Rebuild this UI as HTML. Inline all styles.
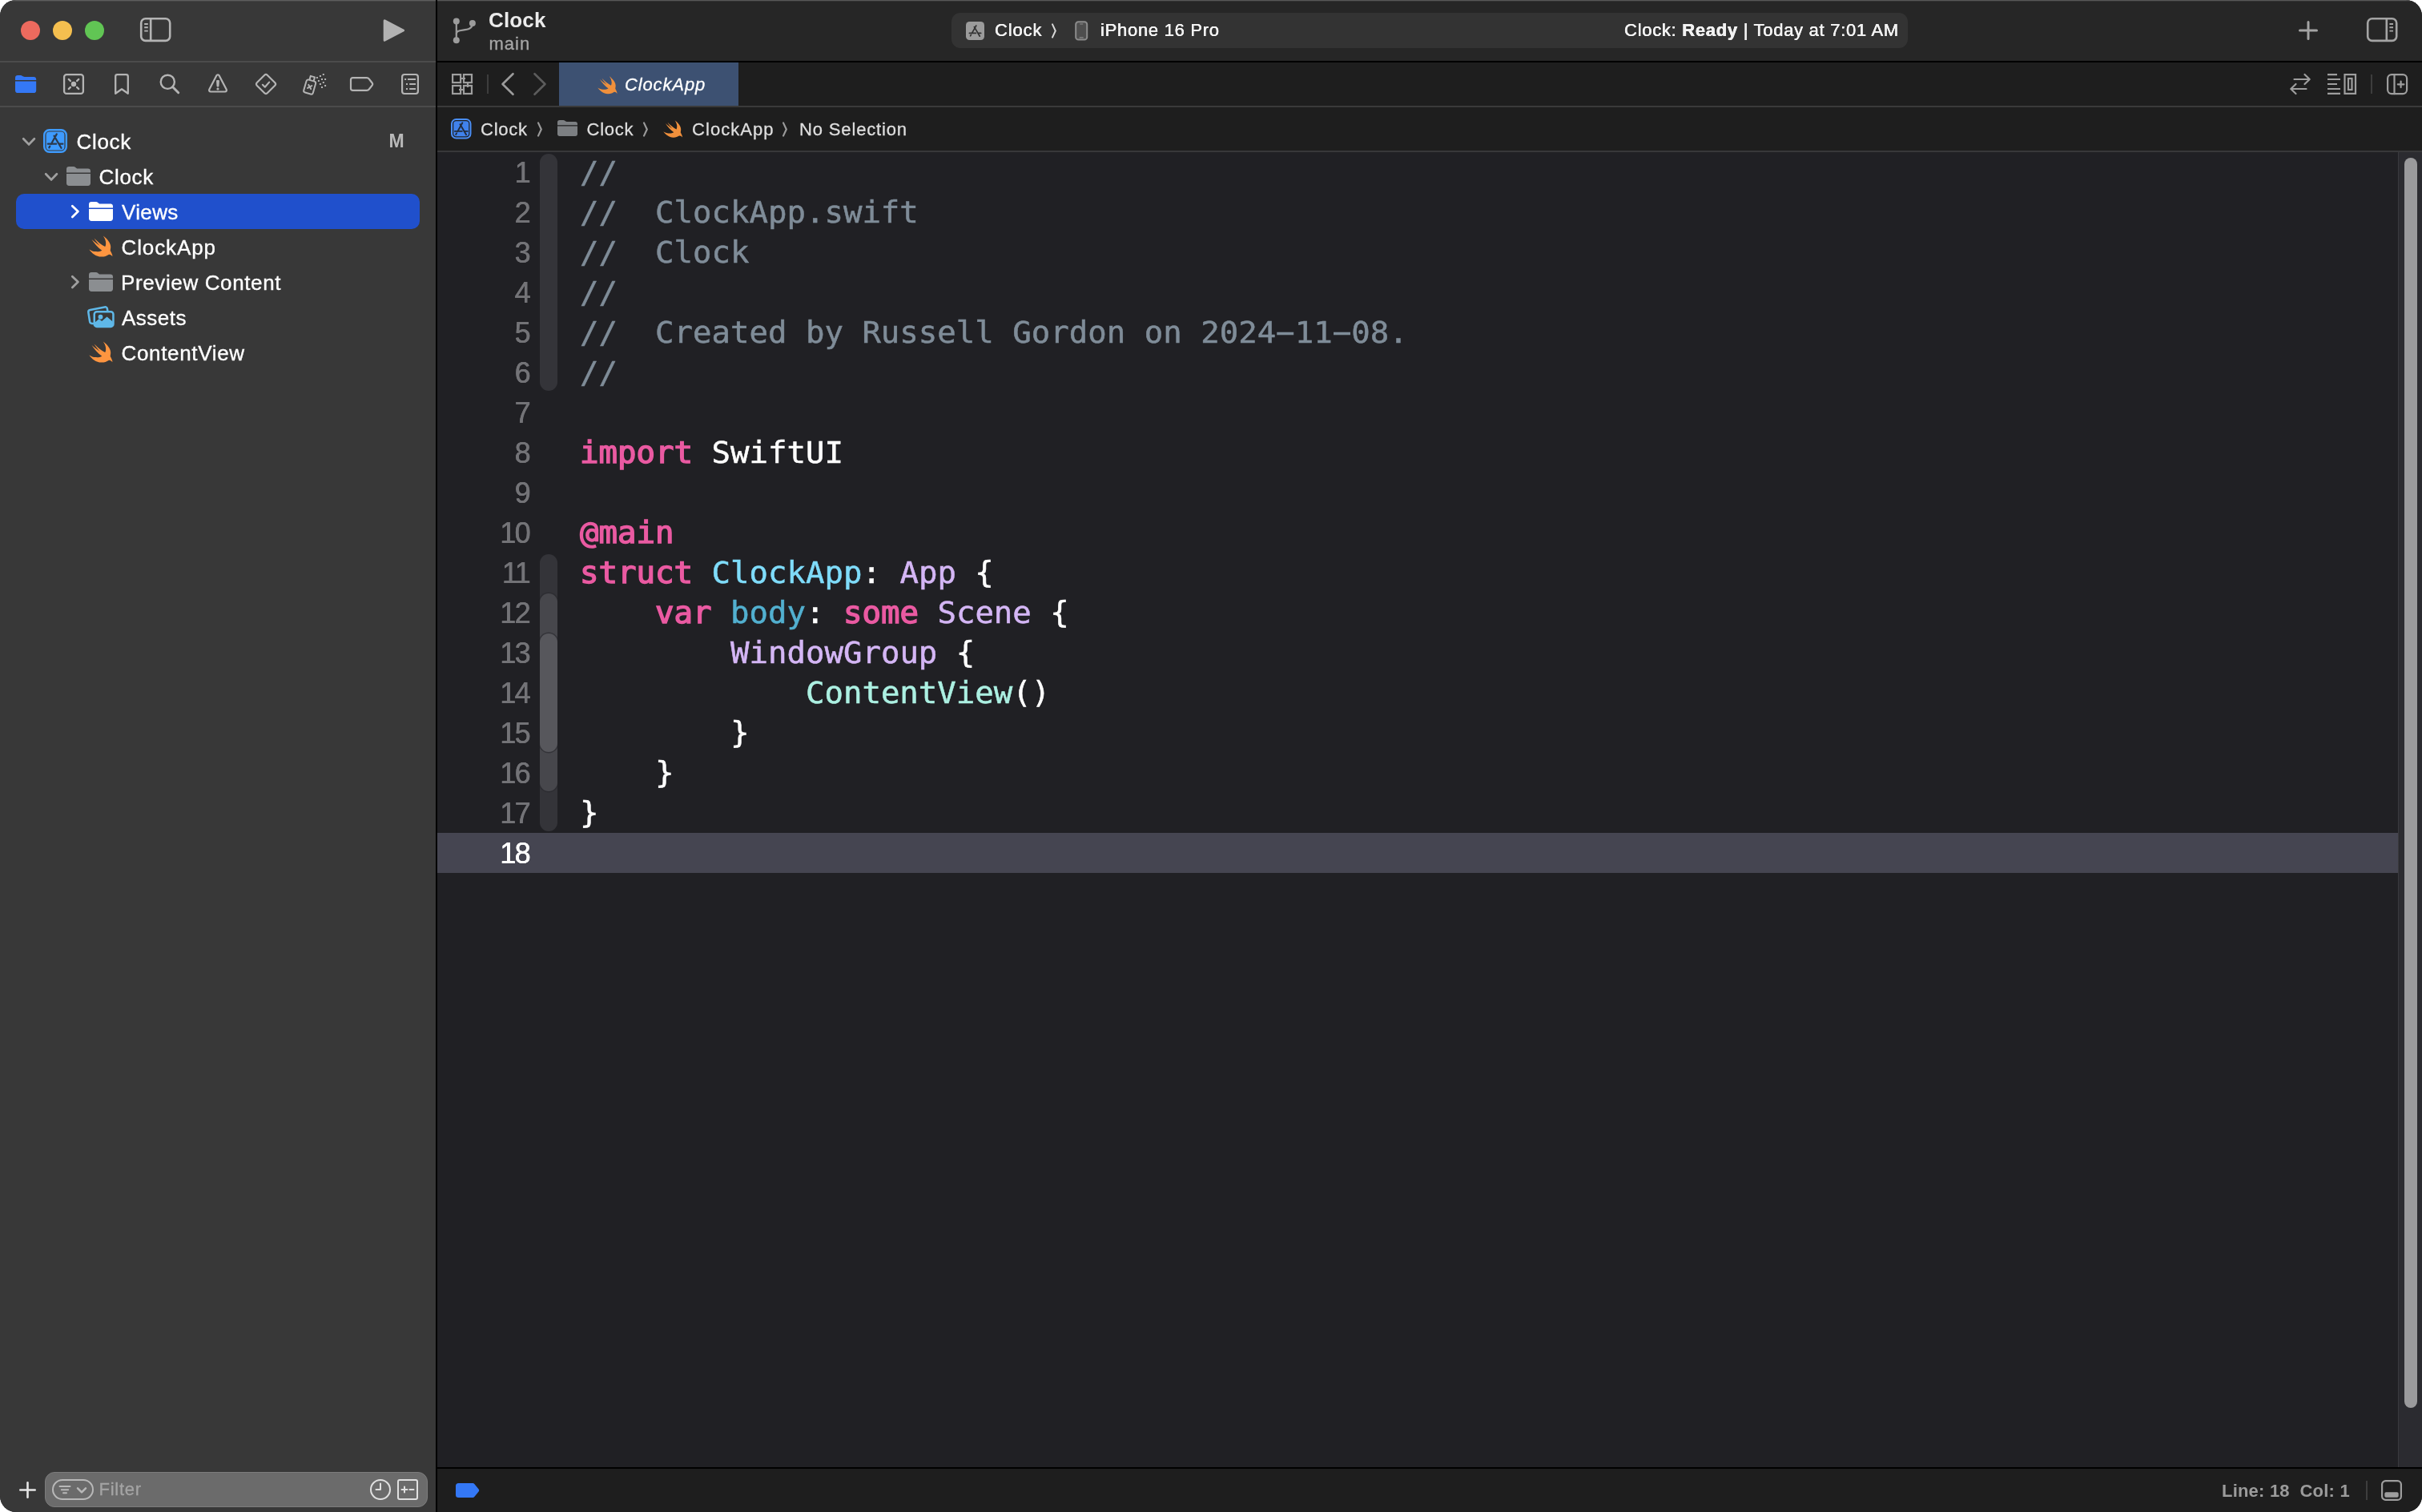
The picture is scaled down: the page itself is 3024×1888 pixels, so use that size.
<!DOCTYPE html>
<html lang="en">
<head>
<meta charset="utf-8">
<title>Clock — ClockApp.swift</title>
<style>
*{box-sizing:border-box;margin:0;padding:0}
html,body{width:3024px;height:1888px;background:#fff;overflow:hidden}
body{font-family:"Liberation Sans",sans-serif;color:#fff;-webkit-font-smoothing:antialiased}
#win{will-change:transform;position:absolute;left:0;top:0;width:3024px;height:1888px;border-radius:20px;overflow:hidden;background:#1f1f24}
.abs{position:absolute}
svg{position:absolute;overflow:visible}
.t{position:absolute;white-space:pre;line-height:1}
/* ---------- sidebar ---------- */
#side{position:absolute;left:0;top:0;width:544px;height:1888px;background:#383838}
#vdiv{position:absolute;left:544px;top:0;width:2px;height:1888px;background:#000}
.hl{position:absolute;left:0;width:544px;height:2px;background:#4b4b4b}
.tl{position:absolute;top:26px;width:24px;height:24px;border-radius:50%}
.row{position:absolute;left:0;width:544px;height:44px}
.row .t{font-size:26px;top:9px;color:#fff}
#sel{position:absolute;left:20px;top:242px;width:504px;height:44px;border-radius:10px;background:#2050cc}
/* ---------- editor chrome ---------- */
#title{position:absolute;left:546px;top:0;width:2478px;height:76px;background:#262626}
#tline{position:absolute;left:546px;top:76px;width:2478px;height:2px;background:#000}
#tabs{position:absolute;left:546px;top:78px;width:2478px;height:54px;background:#1e1e1e}
#tabsb{position:absolute;left:546px;top:132px;width:2478px;height:2px;background:#3a3a3a}
#jump{position:absolute;left:546px;top:134px;width:2478px;height:54px;background:#1e1e1e}
#jumpb{position:absolute;left:546px;top:188px;width:2478px;height:2px;background:#38383a}
#tab{position:absolute;left:698px;top:78px;width:224px;height:54px;background:#3d5172}
#pill{position:absolute;left:1188px;top:16px;width:1194px;height:44px;border-radius:11px;background:#333333}
.jb{font-size:22px;color:#dedede;top:151px;-webkit-text-stroke:0.3px #dedede}
.tb{font-size:22px;color:#f2f2f2;text-shadow:0.3px 0 0 currentColor,-0.15px 0 0 currentColor}
/* ---------- code ---------- */
#code{position:absolute;left:546px;top:190px;width:2448px;height:1642px;background:#202024}
#cur{position:absolute;left:546px;top:1040px;width:2448px;height:50px;background:#454551}
.ln{position:absolute;left:560px;width:103px;height:50px;text-align:right;font-family:"Liberation Sans",sans-serif;font-size:36px;line-height:50px;color:#737377;padding-top:1px;letter-spacing:-1.6px;padding-right:2px;text-shadow:0.4px 0 0 currentColor,-0.2px 0 0 currentColor}
.cl{position:absolute;left:724px;height:50px;font-family:"DejaVu Sans Mono","Liberation Mono",monospace;font-size:37px;line-height:50px;white-space:pre;color:#fff;transform:scaleX(1.0546);transform-origin:0 0}
.cl{-webkit-text-stroke:0.5px;margin-top:0.8px}.c{color:#7f8c98}.k{color:#ea5aa2;-webkit-text-stroke:1.4px}.ty{color:#7fdcfa}.d{color:#52b0d0}.p{color:#d4b6f5}.u{color:#acf0e2}
#track{position:absolute;left:2994px;top:190px;width:30px;height:1642px;background:#2b2b30;border-left:1px solid #3a3a3e}
#thumb{position:absolute;left:3002px;top:197px;width:16px;height:1561px;border-radius:8px;background:#9a9a9c}
#bline{position:absolute;left:546px;top:1832px;width:2478px;height:2px;background:#000}
#bbar{position:absolute;left:546px;top:1834px;width:2478px;height:54px;background:#1e1e1e}
.hy{display:inline-block;transform:scaleX(2) translateY(-1px)}
.rib{position:absolute;left:674px;width:22px;border-radius:11px}
</style>
</head>
<body>
<div id="win">
<div id="side">
  <div class="abs" style="left:0;top:0;width:544px;height:1px;background:#5e5e5e"></div>
  <div class="abs" style="left:0;top:1px;width:544px;height:1px;background:#454545"></div>
  <div class="tl" style="left:26px;background:#ed6a5e"></div>
  <div class="tl" style="left:66px;background:#f5bf4f"></div>
  <div class="tl" style="left:106px;background:#61c554"></div>
  <!-- sidebar toggle -->
  <svg style="left:174px;top:21px" width="40" height="32" viewBox="0 0 40 32" fill="none" stroke="#b4b4b4" stroke-width="2.6">
    <rect x="2.2" y="2.3" width="36" height="27.6" rx="5.5"/><path d="M14.2 2.3V29.9"/><path d="M6.2 9h4.6M6.2 13.3h4.6M6.2 17.6h4.6" stroke-width="1.9"/>
  </svg>
  <!-- play -->
  <svg style="left:476px;top:22px" width="32" height="32" viewBox="0 0 32 32"><path d="M4.2 3.8 L27.6 16 L4.2 28.2 Z" fill="#b2b2b2" stroke="#b2b2b2" stroke-width="3" stroke-linejoin="round"/></svg>
  <div class="hl" style="top:76px"></div>
  <div class="hl" style="top:132px"></div>
  <!-- nav icons -->
  <svg style="left:18px;top:92px" width="28" height="26" viewBox="0 0 28 26"><path d="M1 5.200C1 3.200 2.300 2 4.200 2h3.400c1 0 1.700.3 2.400.9l1.100.7c.5.300 1 .400 1.800.400h11.200c1.900 0 3.100 1.200 3.100 3.100V8.100H1z" fill="#3478f6"/><path d="M1 9.600h26.200v11.300c0 2-1.200 3.200-3.200 3.200H4.200C2.200 24.100 1 22.900 1 20.900z" fill="#3478f6"/></svg>
  <svg style="left:78px;top:91px" width="28" height="28" viewBox="0 0 28 28" fill="none" stroke="#b4b4b4" stroke-width="2.300" stroke-linecap="round"><rect x="2.100" y="2.100" width="23.800" height="23.800" rx="3"/><circle cx="14" cy="14" r="3.200" fill="#b4b4b4" stroke="none"/><path d="M7.700 7.900l2.300 2.200M20.300 7.900l-2.300 2.200M7.700 20.100l2.300-2.200M20.300 20.100l-2.300-2.200" stroke-width="2.200"/></svg>
  <svg style="left:142px;top:91px" width="20" height="28" viewBox="0 0 20 28" fill="none" stroke="#b4b4b4" stroke-width="2.3" stroke-linejoin="round"><path d="M2.200 4.500c0-1.400.8-2.300 2.300-2.300h11c1.500 0 2.300.9 2.300 2.300V25.800L10 20.300 2.200 25.800z"/></svg>
  <svg style="left:198px;top:91px" width="28" height="28" viewBox="0 0 28 28" fill="none" stroke="#b4b4b4" stroke-width="2.4" stroke-linecap="round"><circle cx="11.300" cy="11.300" r="8.600"/><path d="M17.800 17.800l6.900 6.900" stroke-width="3"/></svg>
  <svg style="left:258px;top:91px" width="28" height="27" viewBox="0 0 28 27" fill="none" stroke="#b4b4b4" stroke-width="2.2" stroke-linejoin="round"><path d="M12.400 3.300c.7-1.400 2.500-1.400 3.200 0l9 17.300c.8 1.500 0 2.900-1.700 2.900H5.100c-1.700 0-2.500-1.400-1.700-2.900z"/><path d="M12.600 9.600h2.800l-.5 7.400h-1.800z" fill="#b4b4b4" stroke-width="1"/><circle cx="14" cy="20" r="1.600" fill="#b4b4b4" stroke="none"/></svg>
  <svg style="left:318px;top:91px" width="28" height="28" viewBox="0 0 28 28" fill="none" stroke="#b4b4b4" stroke-width="2.2" stroke-linejoin="round" stroke-linecap="round"><path d="M12.300 2.700c1-1 2.400-1 3.400 0l9.600 9.600c1 1 1 2.400 0 3.400l-9.600 9.600c-1 1-2.400 1-3.400 0l-9.600-9.600c-1-1-1-2.400 0-3.400z"/><path d="M9.900 14.800l2.900 2.900 5.300-6.100"/></svg>
  <svg style="left:376px;top:90px" width="32" height="30" viewBox="0 0 32 30" fill="none" stroke="#b4b4b4" stroke-width="2" stroke-linejoin="round"><g transform="translate(0.3 -0.7) rotate(16 10 17)"><rect x="5" y="10.800" width="12" height="16.600" rx="2.400"/><path d="M8.300 10.800V5.600h5.400v5.200"/><path d="M8.900 16.900l4.200 4.200M13.100 16.900l-4.200 4.200" stroke-linecap="round"/></g><g fill="#b4b4b4" stroke="none"><rect x="26.800" y="2" width="2" height="2"/><rect x="22.900" y="4" width="2" height="2"/><rect x="18.900" y="6" width="2" height="2"/><rect x="25" y="8" width="2" height="2"/><rect x="29.100" y="8" width="2" height="2"/><rect x="20.900" y="10" width="2" height="2"/><rect x="26.800" y="12" width="2" height="2"/><rect x="22.900" y="14" width="2" height="2"/><rect x="29.100" y="16" width="2" height="2"/><rect x="25" y="18" width="2" height="2"/></g></svg>
  <svg style="left:436px;top:95px" width="32" height="20" viewBox="0 0 32 20" fill="none" stroke="#b4b4b4" stroke-width="2.200" stroke-linejoin="round"><path d="M4.500 2.100h17.300c1.400 0 2.300.5 3.100 1.600l3.900 5c.6.800.6 1.800 0 2.600l-3.900 5c-.8 1.100-1.700 1.600-3.100 1.600H4.500c-1.600 0-2.500-.9-2.500-2.500V4.600c0-1.600.9-2.500 2.500-2.500z"/></svg>
  <svg style="left:500px;top:91px" width="24" height="28" viewBox="0 0 24 28" fill="none" stroke="#b4b4b4" stroke-width="2.2"><rect x="2.100" y="2" width="19.800" height="24" rx="3"/><path d="M9 8h10M11.200 14h7.800M11.200 20h7.800" stroke-width="2"/><path d="M5.200 8h2M7 14h2M7 20h2" stroke-width="2"/></svg>
  <!-- rows -->
  <div id="sel"></div>
  <svg style="left:27px;top:171px" width="18" height="12" viewBox="0 0 18 12" fill="none" stroke="#a0a0a0" stroke-width="2.8" stroke-linecap="round" stroke-linejoin="round"><path d="M2.2 2.3L9.05 9.4L15.9 2.3"/></svg><svg style="left:54px;top:161px" width="30" height="30" viewBox="0 0 30 30" fill="none"><rect x="1.2" y="1.2" width="27.6" height="27.6" rx="6.5" stroke="#3e9bff" stroke-width="2.4"/><rect x="3.6" y="3.6" width="22.8" height="22.8" rx="4" fill="#3e9bff"/><path d="M16.8 6.4L9.8 19M8.3 21.6l-1 1.8M13.5 8.6l9 15.2M5.8 18.7h10.4M20.2 18.7h4.2" stroke="#2c3a4c" stroke-width="2.2" stroke-linecap="round"/></svg><span class="t" style="left:95.5px;top:163.5px;font-size:26px;letter-spacing:0.7px;-webkit-text-stroke:0.35px #fff;">Clock</span><span class="t" style="left:485.4px;top:164.7px;font-size:23px;font-weight:bold;color:#b9b9b9">M</span>
  <svg style="left:55px;top:215px" width="18" height="12" viewBox="0 0 18 12" fill="none" stroke="#a0a0a0" stroke-width="2.8" stroke-linecap="round" stroke-linejoin="round"><path d="M2.2 2.3L9.05 9.4L15.9 2.3"/></svg><svg style="left:83px;top:208px" width="30" height="24" viewBox="0 0 30 24"><path d="M0 3.2C0 1.2 1.2 0 3.2 0h5.6c1 0 1.7.3 2.4.9l1.2 1c.5.4 1 .6 1.8.6h12.6c2 0 3.2 1.2 3.2 3.2V7.4H0z" fill="#8b8e91"/><path d="M0 9.1h30v11.7c0 2-1.2 3.2-3.2 3.2H3.2C1.2 24 0 22.8 0 20.8z" fill="#8b8e91"/></svg><span class="t" style="left:123.5px;top:207.5px;font-size:26px;letter-spacing:0.7px;-webkit-text-stroke:0.35px #fff;">Clock</span>
  <svg style="left:88px;top:254.5px" width="12" height="18" viewBox="0 0 12 18" fill="none" stroke="#ffffff" stroke-width="2.8" stroke-linecap="round" stroke-linejoin="round"><path d="M2.3 2.2L9.4 9.05L2.3 15.9"/></svg><svg style="left:110.5px;top:252px" width="30" height="24" viewBox="0 0 30 24"><path d="M0 3.2C0 1.2 1.2 0 3.2 0h5.6c1 0 1.7.3 2.4.9l1.2 1c.5.4 1 .6 1.8.6h12.6c2 0 3.2 1.2 3.2 3.2V7.4H0z" fill="#ffffff"/><path d="M0 9.1h30v11.7c0 2-1.2 3.2-3.2 3.2H3.2C1.2 24 0 22.8 0 20.8z" fill="#ffffff"/></svg><span class="t" style="left:152px;top:251.5px;font-size:26px;letter-spacing:0.35px;-webkit-text-stroke:0.35px #fff;">Views</span>
  <svg style="left:110.5px;top:293.5px" width="30" height="27" viewBox="0 0 30 27"><path d="M17.8.4C23 4 27.5 10 27.2 14.5c-.1 2-.4 3.3-.5 4.4 1.3 2.1 2.8 5.1 2.7 7.4-1.4-1.8-2.9-2.8-4.8-2.4-2.6 1.6-5.6 2.9-9.2 2.7C9 26.5 3.5 22 .4 17.4 3 19 5.5 20 8 20.1c3 .2 5.8.1 8.3-1.4C11 15 6.5 9.5 3.5 4.9c3 2.6 6.5 5.6 10.4 8C11 10 8.5 6.5 6.6 3.4c3.9 4.1 8.9 8.1 13.6 10.7C22 11 21.5 5.5 17.8.4z" fill="#fe9540"/></svg><span class="t" style="left:151.5px;top:295.5px;font-size:26px;letter-spacing:0.9px;-webkit-text-stroke:0.35px #fff;">ClockApp</span>
  <svg style="left:88px;top:342.5px" width="12" height="18" viewBox="0 0 12 18" fill="none" stroke="#a0a0a0" stroke-width="2.8" stroke-linecap="round" stroke-linejoin="round"><path d="M2.3 2.2L9.4 9.05L2.3 15.9"/></svg><svg style="left:110.5px;top:340px" width="30" height="24" viewBox="0 0 30 24"><path d="M0 3.2C0 1.2 1.2 0 3.2 0h5.6c1 0 1.7.3 2.4.9l1.2 1c.5.4 1 .6 1.8.6h12.6c2 0 3.2 1.2 3.2 3.2V7.4H0z" fill="#8b8e91"/><path d="M0 9.1h30v11.7c0 2-1.2 3.2-3.2 3.2H3.2C1.2 24 0 22.8 0 20.8z" fill="#8b8e91"/></svg><span class="t" style="left:151px;top:339.5px;font-size:26px;letter-spacing:0.62px;-webkit-text-stroke:0.35px #fff;">Preview Content</span>
  <svg style="left:108.5px;top:381px" width="34" height="28.5" viewBox="0 0 35 29" fill="none" stroke="#5fb8e8" stroke-width="2.6" stroke-linejoin="round"><path d="M8.5 23.6l-2.6-.2c-1.5-.1-2.4-1-2.7-2.4L1.4 9.3C1.1 7.5 2 6.3 3.7 6L22.3 2.3c1.7-.3 3 .5 3.3 2.2l.6 3.3"/><rect x="9" y="8.3" width="24.4" height="19.2" rx="3.2"/><circle cx="17" cy="15" r="3" fill="#5fb8e8" stroke="none"/><path d="M9.8 22l5.2-4.3 3.7 2.8 6.6-5.7 7.5 6.5v4.2c0 .9-.6 1.5-1.5 1.5H11.3c-.9 0-1.5-.6-1.5-1.5z" fill="#5fb8e8" stroke="none"/></svg><span class="t" style="left:152px;top:383.5px;font-size:26px;letter-spacing:0.5px;-webkit-text-stroke:0.35px #fff;">Assets</span>
  <svg style="left:110.5px;top:425.5px" width="30" height="27" viewBox="0 0 30 27"><path d="M17.8.4C23 4 27.5 10 27.2 14.5c-.1 2-.4 3.3-.5 4.4 1.3 2.1 2.8 5.1 2.7 7.4-1.4-1.8-2.9-2.8-4.8-2.4-2.6 1.6-5.6 2.9-9.2 2.7C9 26.5 3.5 22 .4 17.4 3 19 5.5 20 8 20.1c3 .2 5.8.1 8.3-1.4C11 15 6.5 9.5 3.5 4.9c3 2.6 6.5 5.6 10.4 8C11 10 8.5 6.5 6.6 3.4c3.9 4.1 8.9 8.1 13.6 10.7C22 11 21.5 5.5 17.8.4z" fill="#fe9540"/></svg><span class="t" style="left:151.5px;top:427.5px;font-size:26px;letter-spacing:0.66px;-webkit-text-stroke:0.35px #fff;">ContentView</span>
  <!-- bottom filter -->
  <svg style="left:23px;top:1849px" width="23" height="23" viewBox="0 0 23 23" stroke="#e6e6e6" stroke-width="2.6" stroke-linecap="round"><path d="M11.500 2.300v18.400M2.300 11.500h18.400"/></svg>
  <div class="abs" style="left:56px;top:1838px;width:478px;height:44px;border-radius:12px;background:#6b6b6b;border:1.500px solid #7c7c7c"></div>
  <svg style="left:64px;top:1846px" width="54" height="28" viewBox="0 0 54 28" fill="none" stroke="#b8b8b8" stroke-width="2" stroke-linecap="round"><rect x="2" y="2" width="50" height="24" rx="12"/><path d="M10.500 10h13M12.800 14.200h8.400M15 18.300h4"/><path d="M33 12.300l5 5 5-5" stroke-width="2.500" stroke-linejoin="round"/></svg>
  <span class="t" style="left:123.500px;top:1848.500px;font-size:22px;color:#a4a4a4;letter-spacing:0.76px;-webkit-text-stroke:0.3px #a4a4a4">Filter</span>
  <svg style="left:461px;top:1846px" width="28" height="28" viewBox="0 0 28 28" fill="none" stroke="#e0e0e0" stroke-width="2"><circle cx="14" cy="14" r="12"/><path d="M14 6.500V14H8.500" stroke-linecap="round" stroke-linejoin="round"/></svg>
  <svg style="left:495px;top:1846px" width="28" height="28" viewBox="0 0 28 28" fill="none" stroke="#e0e0e0" stroke-width="2"><rect x="2" y="2" width="24" height="24" rx="2"/><path d="M6.500 14h7M10 10.500v7M16.500 14h5" stroke-linecap="round"/></svg>
</div>
<div id="vdiv"></div>

<div id="title"><div class="abs" style="left:0;top:0;width:2478px;height:1px;background:#585858"></div><div class="abs" style="left:0;top:1px;width:2478px;height:1px;background:#333333"></div></div>
<div id="tline"></div>
<!-- branch icon -->
<svg style="left:564px;top:21px" width="32" height="36" viewBox="0 0 32 36" fill="none" stroke="#9c9c9c" stroke-width="2.2"><path d="M5.8 5.6V29.2"/><path d="M5.8 21.5c0-3.5 2.5-4.3 8-4.9 7-.7 11.9-2 12.1-8.5"/><g fill="#9c9c9c" stroke="none"><circle cx="5.8" cy="5.6" r="4"/><circle cx="25.9" cy="8.1" r="4"/><circle cx="5.8" cy="29.2" r="4"/></g></svg>
<span class="t" style="left:610px;top:11.5px;font-size:26px;font-weight:bold;color:#ebebeb;letter-spacing:0.15px">Clock</span>
<span class="t" style="left:610.5px;top:44px;font-size:22px;color:#a6a6a6;letter-spacing:1px;-webkit-text-stroke:0.3px #a6a6a6">main</span>
<div id="pill"></div>
<!-- scheme app icon -->
<svg style="left:1206px;top:26.5px" width="23" height="23" viewBox="0 0 23 23" fill="none"><rect width="23" height="23" rx="4.5" fill="#9b9b9b"/><path d="M12.8 5L7.4 14.6M6.4 16.4l-.8 1.4M10.4 6.6l6.9 11.6M4.4 14.4h8M15.4 14.4h3.3" stroke="#333" stroke-width="1.7" stroke-linecap="round"/></svg>
<span class="t tb" style="left:1242px;top:27.4px;letter-spacing:0.85px">Clock</span>
<svg style="left:1312px;top:28px" width="9" height="22" viewBox="0 0 9 22" fill="none" stroke="#d8d8d8" stroke-width="2" stroke-linecap="round" stroke-linejoin="round"><path d="M2 2.4L5.8 10.5L2 18.6"/></svg>
<svg style="left:1342px;top:26px" width="17" height="25" viewBox="0 0 17 25" fill="none"><rect x="1.2" y="1.2" width="14" height="22.4" rx="3.2" fill="#4e4e4e" stroke="#8c8c8c" stroke-width="2"/><path d="M6.2 4h4M5.7 20.8h5" stroke="#8c8c8c" stroke-width="1.2"/></svg>
<span class="t tb" style="left:1374px;top:27.4px;letter-spacing:0.71px">iPhone 16 Pro</span>
<span class="t tb" style="left:2028px;top:27.4px;letter-spacing:0.71px" id="status">Clock: <b>Ready</b> | Today at 7:01 AM</span>
<!-- plus + inspector toggle -->
<svg style="left:2869px;top:25px" width="26" height="26" viewBox="0 0 26 26" stroke="#a4a4a4" stroke-width="3" stroke-linecap="round"><path d="M13 2.5v21M2.5 13h21"/></svg>
<svg style="left:2954px;top:21px" width="40" height="32" viewBox="0 0 40 32" fill="none" stroke="#a4a4a4" stroke-width="2.6"><rect x="2.2" y="2.3" width="36" height="27.6" rx="5.5"/><path d="M25.8 2.3V29.9"/><path d="M29.4 9h4.6M29.4 13.3h4.6M29.4 17.6h4.6" stroke-width="1.9"/></svg>
<!-- tab bar -->
<div id="tabs"></div><div id="tabsb"></div>
<div id="tab"></div>
<svg style="left:563px;top:91px" width="28" height="28" viewBox="0 0 28 28" fill="none" stroke="#9e9e9e" stroke-width="2.2"><rect x="2.1" y="2.1" width="10" height="10"/><rect x="16" y="2.1" width="10" height="10"/><rect x="2.1" y="16" width="10" height="10"/><rect x="16" y="16" width="10" height="10"/><path d="M12 7h6M10 21h6M21 12v6"/></svg>
<div class="abs" style="left:608px;top:93px;width:2px;height:24px;background:#3d3d3d"></div>
<svg style="left:624px;top:90px" width="20" height="30" viewBox="0 0 20 30" fill="none" stroke="#9c9c9c" stroke-width="2.6" stroke-linecap="round" stroke-linejoin="round"><path d="M16.5 2.2L3.5 15l13 12.8"/></svg>
<svg style="left:664px;top:90px" width="20" height="30" viewBox="0 0 20 30" fill="none" stroke="#5c5c5c" stroke-width="2.6" stroke-linecap="round" stroke-linejoin="round"><path d="M3.5 2.2L16.5 15l-13 12.8"/></svg>
<svg style="left:746px;top:94.5px" width="25" height="22.5" viewBox="0 0 30 27"><path d="M17.8.4C23 4 27.5 10 27.2 14.5c-.1 2-.4 3.3-.5 4.4 1.3 2.1 2.8 5.1 2.7 7.4-1.4-1.8-2.9-2.8-4.8-2.4-2.6 1.6-5.6 2.9-9.2 2.7C9 26.5 3.5 22 .4 17.4 3 19 5.5 20 8 20.1c3 .2 5.8.1 8.3-1.4C11 15 6.5 9.5 3.5 4.9c3 2.6 6.5 5.6 10.4 8C11 10 8.5 6.5 6.6 3.4c3.9 4.1 8.9 8.1 13.6 10.7C22 11 21.5 5.5 17.8.4z" fill="#f0903c"/></svg>
<span class="t" style="left:780px;top:94.5px;font-size:22px;font-style:italic;color:#fff;letter-spacing:0.87px;-webkit-text-stroke:0.3px #fff">ClockApp</span>
<!-- right tab-bar icons -->
<svg style="left:2858px;top:90px" width="28" height="30" viewBox="0 0 28 30" fill="none" stroke="#9e9e9e" stroke-width="2.2" stroke-linecap="round" stroke-linejoin="round"><path d="M6.5 9h19M19.5 3l6.2 6-6.2 6M21.5 21H2.5M8.5 15l-6.2 6 6.2 6"/></svg>
<svg style="left:2905px;top:91px" width="38" height="28" viewBox="0 0 38 28" fill="none" stroke="#9e9e9e" stroke-width="2.2"><path d="M1 2.1h12M1 8h16M1 14h12M1 20h16M1 25.9h16"/><rect x="22.5" y="2.1" width="13.5" height="23.8"/><rect x="27" y="7" width="4.5" height="14"/></svg>
<div class="abs" style="left:2960px;top:93px;width:2px;height:24px;background:#3d3d3d"></div>
<svg style="left:2979px;top:91px" width="28" height="28" viewBox="0 0 28 28" fill="none" stroke="#9e9e9e" stroke-width="2.2" stroke-linecap="round"><rect x="2.1" y="2.1" width="24" height="24" rx="5"/><path d="M10.5 2.1v24"/><path d="M14.8 14.3h7.6M18.6 10.5v7.6"/></svg>
<!-- jump bar -->
<div id="jump"></div><div id="jumpb"></div>
<svg style="left:563px;top:147.5px" width="25.5" height="25.5" viewBox="0 0 30 30" fill="none"><rect x="1.2" y="1.2" width="27.6" height="27.6" rx="6.5" stroke="#4a8ef5" stroke-width="2.4"/><rect x="3.8" y="3.8" width="22.4" height="22.4" rx="4" fill="#4082ec"/><path d="M16.8 6.4L9.8 19M8.3 21.6l-1 1.8M13.5 8.6l9 15.2M5.8 18.7h10.4M20.2 18.7h4.2" stroke="#222c3c" stroke-width="2.3" stroke-linecap="round"/></svg>
<span class="t jb" style="left:600px;letter-spacing:0.75px">Clock</span>
<svg style="left:670px;top:151px" width="9" height="22" viewBox="0 0 9 22" fill="none" stroke="#9a9a9a" stroke-width="2.2" stroke-linecap="round" stroke-linejoin="round"><path d="M2 2.4L5.8 10.5L2 18.6"/></svg>
<svg style="left:696px;top:150px" width="25" height="20" viewBox="0 0 30 24"><path d="M0 3.2C0 1.2 1.2 0 3.2 0h5.6c1 0 1.7.3 2.4.9l1.2 1c.5.4 1 .6 1.8.6h12.6c2 0 3.2 1.2 3.2 3.2V7.4H0z" fill="#7c7f82"/><path d="M0 9.1h30v11.7c0 2-1.2 3.2-3.2 3.2H3.2C1.2 24 0 22.8 0 20.8z" fill="#7c7f82"/></svg>
<span class="t jb" style="left:732.5px;letter-spacing:0.75px">Clock</span>
<svg style="left:802px;top:151px" width="9" height="22" viewBox="0 0 9 22" fill="none" stroke="#9a9a9a" stroke-width="2.2" stroke-linecap="round" stroke-linejoin="round"><path d="M2 2.4L5.8 10.5L2 18.6"/></svg>
<svg style="left:828px;top:149.5px" width="24.5" height="22" viewBox="0 0 30 27"><path d="M17.8.4C23 4 27.5 10 27.2 14.5c-.1 2-.4 3.3-.5 4.4 1.3 2.1 2.8 5.1 2.7 7.4-1.4-1.8-2.9-2.8-4.8-2.4-2.6 1.6-5.6 2.9-9.2 2.7C9 26.5 3.5 22 .4 17.4 3 19 5.5 20 8 20.1c3 .2 5.8.1 8.3-1.4C11 15 6.5 9.5 3.5 4.9c3 2.6 6.5 5.6 10.4 8C11 10 8.5 6.5 6.6 3.4c3.9 4.1 8.9 8.1 13.6 10.7C22 11 21.5 5.5 17.8.4z" fill="#f0903c"/></svg>
<span class="t jb" style="left:864px;letter-spacing:1.05px">ClockApp</span>
<svg style="left:976px;top:151px" width="9" height="22" viewBox="0 0 9 22" fill="none" stroke="#9a9a9a" stroke-width="2.2" stroke-linecap="round" stroke-linejoin="round"><path d="M2 2.4L5.8 10.5L2 18.6"/></svg>
<span class="t jb" style="left:998px;letter-spacing:0.85px">No Selection</span>

<div id="code"></div>
<div id="cur"></div>
<div class="rib" style="top:192px;height:296px;background:#343439"></div>
<div class="rib" style="top:692px;height:346px;background:#343439;overflow:hidden"><div class="rib" style="left:0;top:49px;height:247px;background:#47474c;box-shadow:0 0 0 1.5px #2d2d32"></div><div class="rib" style="left:0;top:99px;height:148px;background:#57575c;box-shadow:0 0 0 1.5px #343439"></div></div>
<div class="ln" style="top:190px">1</div>
<div class="cl" style="top:190px"><span class="c">//</span></div>
<div class="ln" style="top:240px">2</div>
<div class="cl" style="top:240px"><span class="c">//  ClockApp.swift</span></div>
<div class="ln" style="top:290px">3</div>
<div class="cl" style="top:290px"><span class="c">//  Clock</span></div>
<div class="ln" style="top:340px">4</div>
<div class="cl" style="top:340px"><span class="c">//</span></div>
<div class="ln" style="top:390px">5</div>
<div class="cl" style="top:390px"><span class="c">//  Created by Russell Gordon on 2024<span class="hy">-</span>11<span class="hy">-</span>08.</span></div>
<div class="ln" style="top:440px">6</div>
<div class="cl" style="top:440px"><span class="c">//</span></div>
<div class="ln" style="top:490px">7</div>
<div class="ln" style="top:540px">8</div>
<div class="cl" style="top:540px"><span class="k">import</span> SwiftUI</div>
<div class="ln" style="top:590px">9</div>
<div class="ln" style="top:640px">10</div>
<div class="cl" style="top:640px"><span class="k">@main</span></div>
<div class="ln" style="top:690px">11</div>
<div class="cl" style="top:690px"><span class="k">struct</span> <span class="ty">ClockApp</span>: <span class="p">App</span> {</div>
<div class="ln" style="top:740px">12</div>
<div class="cl" style="top:740px">    <span class="k">var</span> <span class="d">body</span>: <span class="k">some</span> <span class="p">Scene</span> {</div>
<div class="ln" style="top:790px">13</div>
<div class="cl" style="top:790px">        <span class="p">WindowGroup</span> {</div>
<div class="ln" style="top:840px">14</div>
<div class="cl" style="top:840px">            <span class="u">ContentView</span>()</div>
<div class="ln" style="top:890px">15</div>
<div class="cl" style="top:890px">        }</div>
<div class="ln" style="top:940px">16</div>
<div class="cl" style="top:940px">    }</div>
<div class="ln" style="top:990px">17</div>
<div class="cl" style="top:990px">}</div>
<div class="ln" style="top:1040px;color:#fff">18</div>
<div id="track"></div><div id="thumb"></div>

<div id="bline"></div><div id="bbar"></div>
<svg style="left:569px;top:1851.8px" width="29.4" height="18" viewBox="0 0 30 19" preserveAspectRatio="none"><path d="M3.5 0h17.8c1.2 0 2 .4 2.7 1.3l5.2 6.6c.8 1 .8 2.2 0 3.2L24 17.7c-.7.9-1.5 1.3-2.7 1.3H3.5C1.3 19 0 17.7 0 15.5v-12C0 1.3 1.3 0 3.5 0z" fill="#3478f6"/></svg>
<span class="t" style="left:2774px;top:1850.7px;font-size:22px;font-weight:bold;color:#9b9b9b;letter-spacing:0.21px" id="linecol">Line: 18  Col: 1</span>
<div class="abs" style="left:2954px;top:1849px;width:2px;height:24px;background:#3d3d3d"></div>
<svg style="left:2972px;top:1847px" width="28" height="28" viewBox="0 0 28 28" fill="none"><rect x="2.1" y="2.1" width="23.8" height="23.8" rx="4.5" stroke="#9e9e9e" stroke-width="2.2"/><rect x="5.3" y="16.3" width="17.4" height="6.4" rx="1.8" fill="#9e9e9e"/></svg>

</div>
</body>
</html>
